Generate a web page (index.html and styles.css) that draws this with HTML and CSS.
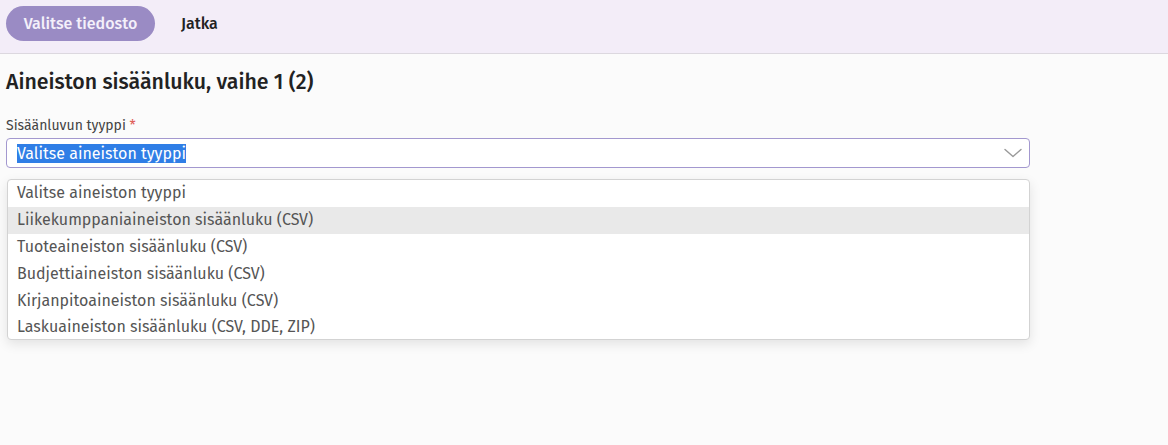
FILE: index.html
```html
<!DOCTYPE html>
<html lang="fi">
<head>
<meta charset="utf-8">
<title>Aineiston sisäänluku</title>
<link rel="stylesheet" href="styles.css">
</head>
<body>
<header class="toolbar">
  <button class="btn-primary" type="button">Valitse tiedosto</button>
  <button class="btn-text" type="button">Jatka</button>
</header>
<main class="content">
  <h1 class="title">Aineiston sisäänluku, vaihe 1 (2)</h1>
  <div class="field">
    <label class="label">Sisäänluvun tyyppi <span class="req">*</span></label>
    <div class="select">
      <span class="select-value"><span class="sel">Valitse aineiston tyyppi</span></span>
      <svg class="chevron" width="18" height="10" viewBox="0 0 18 10"><path d="M1 1.5 L9 8.5 L17 1.5" fill="none" stroke="#999" stroke-width="1.4" stroke-linecap="round" stroke-linejoin="round"/></svg>
    </div>
    <ul class="menu">
      <li class="opt">Valitse aineiston tyyppi</li>
      <li class="opt active">Liikekumppaniaineiston sisäänluku (CSV)</li>
      <li class="opt">Tuoteaineiston sisäänluku (CSV)</li>
      <li class="opt">Budjettiaineiston sisäänluku (CSV)</li>
      <li class="opt">Kirjanpitoaineiston sisäänluku (CSV)</li>
      <li class="opt">Laskuaineiston sisäänluku (CSV, DDE, ZIP)</li>
    </ul>
  </div>
</main>
</body>
</html>
```

FILE: styles.css
```css
* { box-sizing: border-box; }
html, body { margin: 0; padding: 0; }
body {
  background: #fbfbfb;
  font-family: "Fira Sans", Roboto, "Liberation Sans", sans-serif;
  color: #222;
  width: 1168px;
  height: 445px;
  overflow: hidden;
}
.toolbar {
  height: 54px;
  background: #f3edf8;
  border-bottom: 1px solid #dcd8df;
  display: flex;
  align-items: flex-start;
  padding: 6px 6px 0 6px;
  gap: 10px;
}
.btn-primary {
  height: 35px;
  width: 149px;
  border: none;
  border-radius: 18px;
  background: #9a8bc4;
  color: #f4f0fa;
  font-family: inherit;
  font-size: 16px;
  font-weight: 500;
  padding: 0;
}
.btn-text {
  height: 35px;
  border: none;
  background: transparent;
  font-family: inherit;
  font-size: 16px;
  font-weight: 500;
  color: #222;
  padding: 0 16px;
}
.content {
  padding: 15px 6px 0 6px;
}
.title {
  margin: 0;
  font-size: 21.3px;
  font-weight: 500;
  line-height: 26px;
  color: #222;
}
.field {
  margin-top: 22px;
  width: 1024px;
}
.label {
  display: block;
  font-size: 14px;
  line-height: 17px;
  color: #444;
  margin-bottom: 4px;
}
.req { color: #e0605a; }
.select {
  height: 30px;
  background: #fff;
  border: 1px solid #a398cf;
  border-radius: 4px;
  display: flex;
  align-items: center;
  justify-content: space-between;
  padding: 0 7px 0 10px;
}
.select-value { font-size: 16px; line-height: 19px; }
.sel {
  background: #2f7ee6;
  color: #fff;
}
.chevron { display: block; }
.menu {
  list-style: none;
  margin: 11px 0 0 1px;
  padding: 0;
  background: #fff;
  border: 1px solid #d3d3d3;
  border-radius: 4px;
  box-shadow: 0 4px 12px rgba(0,0,0,0.10);
  overflow: hidden;
}
.opt {
  height: 27px;
  line-height: 26px;
  padding: 0 9px;
  font-size: 16px;
  color: #555;
}
.opt:last-child { height: 24px; line-height: 24px; }
.opt.active { background: #e9e9e9; }
```
